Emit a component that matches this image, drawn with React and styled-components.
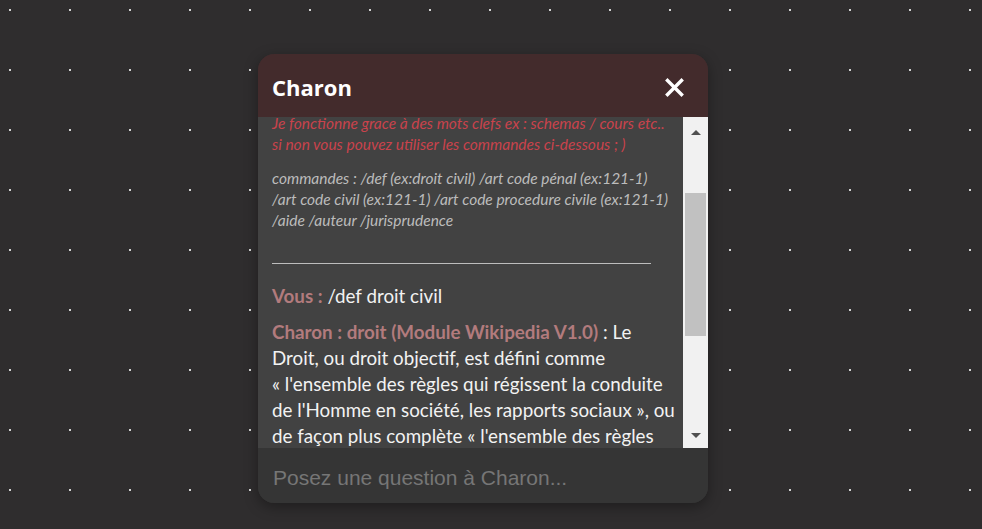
import React from 'react';
import styled, { createGlobalStyle } from 'styled-components';

const GlobalStyle = createGlobalStyle`
	html, body {
		margin: 0;
		height: 100%;
	}
	body {
		background-color: #2f2d2e;
		background-image: conic-gradient(at 2px 2px, transparent 75%, #d4d4d4 0);
		background-size: 60px 60px;
		background-position: 9px 9px;
		font-family: "Lato", "Open Sans", sans-serif;
	}
`;

const Page = styled("div")`
	width: 982px;
	height: 529px;
	padding: 54px 0 0 258px;
	box-sizing: border-box;
`;

const ChatBox = styled("div")`
	width: 450px;
	height: 449px;
	border-radius: 16px;
	display: flex;
	flex-direction: column;
	overflow: hidden;
	background: #333;
	box-shadow: 0 4px 14px rgba(0, 0, 0, 0.35);
`;

const Header = styled("div")`
	height: 63px;
	box-sizing: border-box;
	flex-shrink: 0;
	background: #432b2c;
	padding: 3px 24px 0 14px;
	display: flex;
	align-items: center;
	justify-content: space-between;
`;

const Title = styled("h1")`
	margin: 0;
	color: #fff;
	font-family: "Open Sans", sans-serif;
	font-weight: 700;
	font-size: 22px;
`;

const CloseButton = styled("button")`
	border: 0;
	padding: 0;
	background: transparent;
	width: 20px;
	height: 20px;
	display: flex;
	align-items: center;
	justify-content: center;
	cursor: pointer;
`;

const Body = styled("div")`
	height: 331px;
	display: flex;
	background: #424242;
`;

const Messages = styled("div")`
	flex: 1;
	overflow: hidden;
	padding: 0 5px 0 14px;
`;

const Info = styled("p")`
	margin: ${p => p.$first ? '-4px' : '13px'} 0 0;
	font-size: 15.5px;
	line-height: 21px;
	font-style: italic;
	white-space: nowrap;
	color: ${p => p.$alert ? '#c9434c' : '#bcbcbc'};
`;

const Separator = styled("div")`
	width: 379px;
	height: 1px;
	background: #bdbdbd;
	margin: 32px 0 19px;
`;

const Message = styled("p")`
	margin: 0 0 10px;
	font-size: 18.8px;
	line-height: 26px;
	color: #f2f2f2;
`;

const Author = styled("span")`
	font-weight: 700;
	color: #b27b7d;
`;

const ScrollBar = styled("div")`
	width: 25px;
	flex-shrink: 0;
	background: #f1f1f1;
	display: flex;
	flex-direction: column;
	align-items: center;
`;

const ScrollArrow = styled("div")`
	height: 17px;
	width: 100%;
	display: flex;
	align-items: center;
	justify-content: center;
	margin-top: ${p => p.$down ? 'auto' : '6px'};
	margin-bottom: ${p => p.$down ? '4px' : '0'};
`;

const Thumb = styled("div")`
	width: 21px;
	height: 143px;
	margin-top: 53px;
	background: #c1c1c1;
`;

const InputBar = styled("div")`
	flex: 1;
	display: flex;
	align-items: center;
	background: #353535;
	padding: 4px 15px 0;
`;

const Input = styled("input")`
	width: 100%;
	border: 0;
	outline: none;
	background: transparent;
	font-family: "Liberation Sans", Arial, sans-serif;
	font-size: 21px;
	color: #eee;
	padding: 0;
	&::placeholder {
		color: #767676;
	}
`;

function Arrow({ down }) {
	return (
		<svg width="10" height="6" viewBox="0 0 10 6">
			<polygon points={down ? "0,0 10,0 5,5" : "0,6 10,6 5,1"} fill="#505050" />
		</svg>
	);
}

export default function App() {
	return (
		<>
			<GlobalStyle />
			<Page>
				<ChatBox>
					<Header>
						<Title>Charon</Title>
						<CloseButton aria-label="Fermer">
							<svg width="19" height="19" viewBox="0 0 19 19">
								<path d="M2.5 2.5 L16.5 16.5 M16.5 2.5 L2.5 16.5" stroke="#fff" strokeWidth="3.4" strokeLinecap="square" />
							</svg>
						</CloseButton>
					</Header>
					<Body>
						<Messages>
							<Info $alert $first>
								Je fonctionne grace à des mots clefs ex : schemas / cours etc..<br />
								si non vous pouvez utiliser les commandes ci-dessous ; )
							</Info>
							<Info>
								commandes : /def (ex:droit civil) /art code pénal (ex:121-1)<br />
								/art code civil (ex:121-1) /art code procedure civile (ex:121-1)<br />
								/aide /auteur /jurisprudence
							</Info>
							<Separator />
							<Message>
								<Author>Vous :</Author> /def droit civil
							</Message>
							<Message>
								<Author>Charon : droit (Module Wikipedia V1.0)</Author> : Le Droit, ou droit objectif, est défini comme {"«\u00A0l'ensemble des règles qui régissent la conduite de l'Homme en société, les rapports sociaux\u00A0»"}, ou de façon plus complète {"«\u00A0l'ensemble des règles de conduite socialement édictées et sanctionnées, qui s'imposent aux membres de la société\u00A0»"}.
							</Message>
						</Messages>
						<ScrollBar>
							<ScrollArrow><Arrow /></ScrollArrow>
							<Thumb />
							<ScrollArrow $down><Arrow down /></ScrollArrow>
						</ScrollBar>
					</Body>
					<InputBar>
						<Input placeholder="Posez une question à Charon..." />
					</InputBar>
				</ChatBox>
			</Page>
		</>
	);
}
